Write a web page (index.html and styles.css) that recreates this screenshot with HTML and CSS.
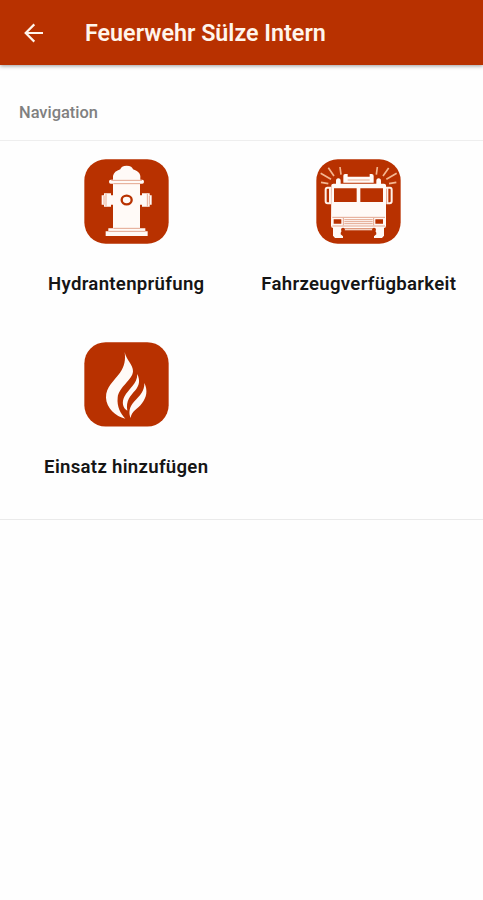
FILE: index.html
```html
<!DOCTYPE html>
<html lang="de">
<head>
<meta charset="utf-8">
<title>Feuerwehr Sülze Intern</title>
<link rel="stylesheet" href="styles.css">
</head>
<body>
<header class="app-bar">
  <svg class="back" viewBox="0 0 20 20"><path d="M19 10H2M10.300 1.400L1.700 10l8.600 8.600"/></svg>
  <h1 class="title">Feuerwehr Sülze Intern</h1>
</header>
<main>
  <h2 class="section-title">Navigation</h2>
  <nav class="grid">
    <a class="tile">
      <svg class="icon" viewBox="24 27 255 255">
        <rect class="red" x="25" y="28" width="253" height="253" rx="64"/>
        <path class="white" d="M111 89V78C113 68 121 62 133 58Q135 48 152 47Q169 48 171 58C184 62 192 69 193 78V89H199Q204 89 204 95Q204 101 199 101H192V235H208V244H215V258H89V244H97V235H111V101H104Q99 101 99 95Q99 89 104 89Z"/>
        <path class="white" d="M77 136H84V130H105V136H112V164H105V170H84V164H77ZM191 136H198V130H221V136H227V164H221V170H198V164H191Z"/>
        <path class="pale-line" d="M84 137V164M90 132V169M214 132V169M220 137V164"/>
        <path class="seam" d="M106 91H198M112 101H192M112 235H192M97 244H208"/>
        <ellipse class="valve" cx="152" cy="150" rx="15" ry="13"/>
      </svg>
      <span class="label">Hydrantenprüfung</span>
    </a>
    <a class="tile">
      <svg class="icon" viewBox="24 27 255 255">
        <rect class="red" x="25" y="28" width="253" height="253" rx="64"/>
        <path class="ray" d="M39 97L61 101M38 70L69 88M61 53L78 78M96 51L99 74M208 51L205 74M242 54L225 78M266 70L235 88M265 97L243 101"/>
        <path class="white" d="M106 77Q106 72 111 72H119V80H185V72H191Q197 72 197 78V98H106ZM84 102V93Q84 85 91 85Q98 85 98 93V102ZM205 102V93Q205 85 212 85Q219 85 219 93V102Z"/>
        <path class="light-line" d="M119 90H185"/>
        <path class="white" d="M70 106Q70 101 76 101H228Q234 101 234 106V227Q234 234 228 234H76Q69 234 69 227Z"/>
        <path class="mirror" d="M70 113H58Q53 113 53 119V154Q53 160 59 160H66V113M234 113H246Q251 113 251 119V154Q251 160 245 160H238V113"/>
        <path class="red" d="M78 115H146V156H78ZM157 115H225V156H157ZM77 208H100V221H77ZM202 208H225V221H202Z"/>
        <path class="seam" d="M73 202H231M73 228H231M106 204V226M197 204V226M109 209H194M109 215H194M109 221H194"/>
        <path class="white" d="M75 234H110V241Q97 241 98 253L105 259V264H81L75 257ZM228 234H193V241Q206 241 205 253L198 259V264H222L228 257Z"/>
        <path class="light-line" d="M110 238H192"/>
        <circle class="red" cx="105" cy="239" r="6"/>
        <circle class="red" cx="198" cy="239" r="6"/>
      </svg>
      <span class="label">Fahrzeugverfügbarkeit</span>
    </a>
    <a class="tile">
      <svg class="icon" viewBox="24 23 255 255">
        <rect class="red" x="25" y="23.500" width="253" height="253" rx="64"/>
        <path class="white" d="M146 53C151 78 172 91 171 111C170 137 128 158 125 190C122 216 134 238 148 253C119 246 91 220 90 190C89 157 116 138 132 115C146 95 149 77 146 53Z"/>
        <path class="white" d="M184 119C193 139 190 153 178 168C163 185 149 199 154 229C140 221 137 203 145 187C158 163 184 149 184 119Z"/>
        <path class="white" d="M205 146C216 169 212 188 198 207C184 226 167 230 164 251C157 235 160 217 174 202C192 184 206 169 205 146Z"/>
      </svg>
      <span class="label">Einsatz hinzufügen</span>
    </a>
  </nav>
</main>
</body>
</html>
```
FILE: styles.css
```css
body {
  margin: 0;
  background: #fefefe;
  font-family: Roboto, sans-serif;
}
.app-bar {
  display: flex;
  align-items: center;
  height: 65px;
  padding-left: 23.5px;
  background: #b83100;
  box-shadow: 0 1px 4px rgba(0, 0, 0, 0.4);
}
.back {
  width: 20px;
  height: 20px;
  margin-right: 41.5px;
  fill: none;
  stroke: #fff5ec;
  stroke-width: 2.2;
}
.title {
  margin: 0;
  padding-top: 1px;
  color: #fff5ec;
  font-size: 23.3px;
  font-weight: 600;
  line-height: 30px;
}
.section-title {
  margin: 0;
  padding: 38px 19px 17px;
  border-bottom: 1px solid #eee;
  color: #808080;
  font-size: 16.4px;
  font-weight: 500;
  line-height: 20px;
}
.grid {
  display: grid;
  grid-template-columns: 1fr 1fr;
  padding: 18px 8px 0 10px;
  height: 360px;
  grid-auto-rows: 183px;
  border-bottom: 1px solid #eaeaea;
}
.tile {
  display: flex;
  flex-direction: column;
  align-items: center;
}
.icon {
  width: 85px;
  height: 85px;
}
.label {
  margin-top: 28px;
  color: #151515;
  font-size: 18.6px;
  font-weight: 600;
  line-height: 24px;
  letter-spacing: 0.3px;
  white-space: nowrap;
}
.red { fill: #b83100; }
.white { fill: #fffaf7; }
.ray, .light-line, .pale-line, .seam, .mirror, .valve { fill: none; }
.ray { stroke: #f4b690; stroke-width: 5; }
.light-line { stroke: #f4d2c2; stroke-width: 6; }
.pale-line { stroke: #e9ad94; stroke-width: 3; }
.seam { stroke: #e3a58e; stroke-width: 3; }
.mirror { stroke: #fff0e8; stroke-width: 6; }
.valve { stroke: #b83100; stroke-width: 7; }
```
